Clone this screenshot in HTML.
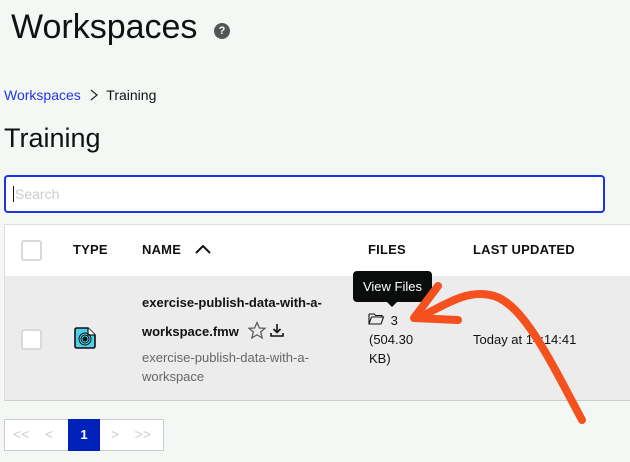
<!DOCTYPE html>
<html><head><style>
body{margin:0;width:630px;height:462px;background:#f4f8f5;font-family:"Liberation Sans",sans-serif;position:relative;overflow:hidden;color:#111}
.a{position:absolute}
.cb{position:absolute;width:17px;height:17px;border:2px solid #d5dbdc;border-radius:3px;background:#fff}
.th{position:absolute;top:242px;font-size:13px;font-weight:bold;letter-spacing:.2px}
</style></head><body>
<div class="a" style="left:11px;top:8px;font-size:34px">Workspaces</div>
<div class="a" style="left:214px;top:23px;width:16px;height:16px;border-radius:50%;background:#555;color:#fff;font-size:11px;font-weight:bold;text-align:center;line-height:16px">?</div>
<div class="a" style="left:4px;top:87px;font-size:14px"><span style="color:#2233ee">Workspaces</span> <svg width="14" height="14" style="vertical-align:-2px;margin:0 2px"><path d="M4 2 L10 7 L4 12" fill="none" stroke="#222" stroke-width="1.2"/></svg> Training</div>
<div class="a" style="left:4px;top:123px;font-size:27px">Training</div>
<div class="a" style="left:4px;top:175px;width:597px;height:34px;border:2px solid #1a33e6;border-radius:4px;background:#fff"></div>
<div class="a" style="left:13px;top:186px;font-size:14px;color:#ccc;border-left:1px solid #111;padding-left:1px;line-height:16px">Search</div>
<div class="a" style="left:4px;top:224px;width:626px;height:52px;background:#fff;border:1px solid #ddd;border-right:none"></div>
<div class="a" style="left:4px;top:276px;width:626px;height:124px;background:#ececec;border-bottom:1px solid #ccc;border-left:1px solid #ddd"></div>
<div class="cb" style="left:21px;top:240px"></div>
<div class="th" style="left:73px">TYPE</div>
<div class="th" style="left:142px">NAME</div>
<svg class="a" style="left:194px;top:243px" width="18" height="12"><path d="M2 10 L9 3 L16 10" fill="none" stroke="#111" stroke-width="2"/></svg>
<div class="th" style="left:368px">FILES</div>
<div class="th" style="left:473px">LAST UPDATED</div>
<div class="cb" style="left:21px;top:329px"></div>
<svg class="a" style="left:74px;top:327px" width="23" height="23"><path d="M3 1 H14 L21 8 V19 Q21 21 19 21 H3 Q1 21 1 19 V3 Q1 1 3 1Z" fill="#4fd0ea" stroke="#111" stroke-width="1.6"/><path d="M14 1 V8 H21" fill="#fff" stroke="#111" stroke-width="1.2"/><circle cx="11" cy="12" r="6" fill="none" stroke="#111" stroke-width="1"/><circle cx="11" cy="12" r="4" fill="none" stroke="#111" stroke-width="1"/><circle cx="11" cy="12" r="2.5" fill="#111"/></svg>
<div class="a" style="left:142px;top:295px;font-size:13px;font-weight:bold">exercise-publish-data-with-a-</div>
<div class="a" style="left:142px;top:324px;font-size:13px;font-weight:bold">workspace.fmw</div>
<svg class="a" style="left:247px;top:321px" width="20" height="19"><path d="M10 1.5 L12.4 7 L18 7.3 L13.6 11 L15.2 17 L10 13.8 L4.8 17 L6.4 11 L2 7.3 L7.6 7Z" fill="none" stroke="#555" stroke-width="1.2"/></svg>
<svg class="a" style="left:269px;top:323px" width="16" height="15"><path d="M8 1 V9 M4.5 6 L8 9.5 L11.5 6 M2 10 V13 H14 V10" fill="none" stroke="#111" stroke-width="1.6"/></svg>
<div class="a" style="left:142px;top:348px;font-size:13px;color:#666;line-height:19px">exercise-publish-data-with-a-<br>workspace</div>
<div class="a" style="left:353px;top:271px;width:79px;height:31px;background:#0b0d0c;border-radius:4px;color:#fff;font-size:13px;text-align:center;line-height:31px">View Files</div>
<div class="a" style="left:386px;top:301px;width:0;height:0;border-left:6px solid transparent;border-right:6px solid transparent;border-top:6px solid #0b0d0c"></div>
<svg class="a" style="left:368px;top:312px" width="17" height="13"><path d="M1 2 H6 L7.5 3.5 H14 V5 M1 2 V12 H13 L15.5 5 H3.5 L1 12" fill="none" stroke="#111" stroke-width="1.1"/></svg>
<div class="a" style="left:369px;top:311px;font-size:13px;line-height:19px">&nbsp;&nbsp;&nbsp;&nbsp;&nbsp;&nbsp;3<br>(504.30<br>KB)</div>
<div class="a" style="left:473px;top:332px;font-size:13px">Today at 14:14:41</div>
<svg class="a" style="left:0;top:0" width="630" height="462"><path d="M582 420 C545 350 520 300 490 295 C465 290 445 305 418 318" fill="none" stroke="#f4511e" stroke-width="8" stroke-linecap="round"/><path d="M438 286 L414 318 L458 320" fill="none" stroke="#f4511e" stroke-width="8" stroke-linecap="round" stroke-linejoin="round"/></svg>
<div class="a" style="left:4px;top:419px;width:158px;height:30px;border:1px solid #ccc;background:#fff"></div>
<div class="a" style="left:68px;top:419px;width:32px;height:32px;background:#0022bb;color:#fff;font-size:13px;font-weight:bold;text-align:center;line-height:32px">1</div>
<div class="a" style="left:13px;top:426px;font-size:14px;color:#ccc">&lt;&lt;&nbsp;&nbsp;&nbsp;&nbsp;&lt;</div>
<div class="a" style="left:111px;top:426px;font-size:14px;color:#ccc">&gt;&nbsp;&nbsp;&nbsp;&nbsp;&gt;&gt;</div>
</body></html>
